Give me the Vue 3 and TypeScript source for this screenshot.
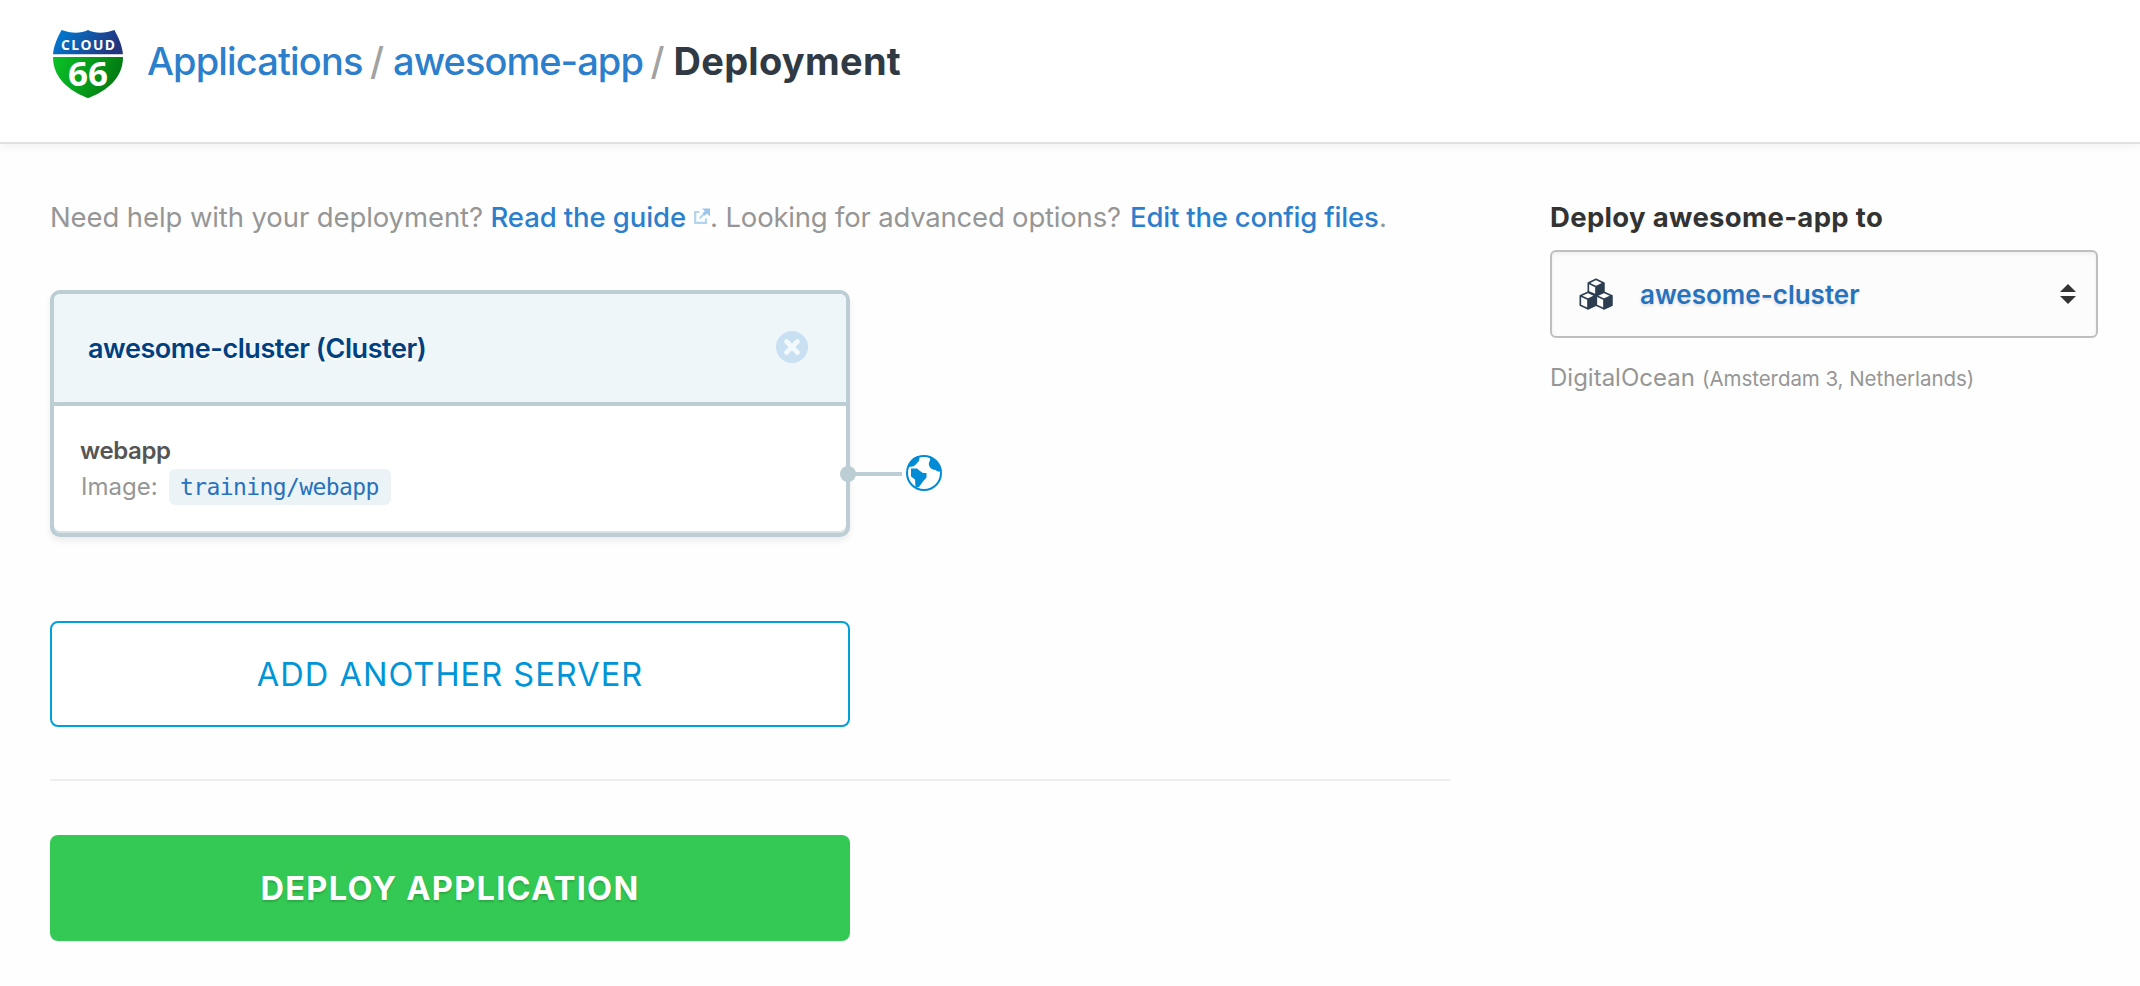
<script setup lang="ts">
interface Service {
  name: string
  image: string
}

const appName = 'awesome-app'
const cluster = 'awesome-cluster'
const services: Service[] = [{ name: 'webapp', image: 'training/webapp' }]
const provider = 'DigitalOcean'
const region = '(Amsterdam 3, Netherlands)'
</script>

<template>
  <div class="page">
    <header class="topbar">
      <svg class="logo" width="70" height="69" viewBox="0 0 70 69">
        <defs>
          <linearGradient id="shieldBlue" x1="0" y1="0" x2="1" y2="0.25">
            <stop offset="0.1" stop-color="#0079d0" />
            <stop offset="1" stop-color="#24357f" />
          </linearGradient>
          <linearGradient id="shieldGreen" x1="0" y1="0" x2="1" y2="0.2">
            <stop offset="0.1" stop-color="#0abb25" />
            <stop offset="1" stop-color="#037a12" />
          </linearGradient>
        </defs>
        <path d="M8.500 0C17 3 27 4 35 0C43 4 53 3 61.500 0C65 7 69 14 70 24.300H0C1 14 5 7 8.500 0Z" fill="url(#shieldBlue)" />
        <path d="M0 27H70C70 49 53 61 35 68.300C17 61 0 49 0 27Z" fill="url(#shieldGreen)" />
        <text class="logo-name" x="8" y="19.900" textLength="54">CLOUD</text>
        <text class="logo-number" x="15" y="55.700" textLength="40" lengthAdjust="spacingAndGlyphs">66</text>
      </svg>
      <nav class="crumbs">
        <a class="crumb-root">Applications</a>
        <span class="slash">/</span>
        <a class="crumb-app">{{ appName }}</a>
        <span class="slash">/</span>
        <strong class="crumb-current">Deployment</strong>
      </nav>
    </header>

    <div class="content">
      <main class="main">
        <p class="help">
          <span class="help-question">Need help with your deployment?</span>
          <a class="help-guide">Read the guide</a>
          <svg class="external" width="16" height="16" viewBox="0 0 16 16">
            <path d="M5.500 4H1.200V14.800H12V10.500" fill="none" stroke="#b4d3ed" stroke-width="2.200" />
            <path d="M5.500 10.500L12 4" fill="none" stroke="#b4d3ed" stroke-width="2" />
            <path d="M8 0.500H16V8.500L13 5.500L10.800 7.700L8.500 5.400L10.800 3.200Z" fill="#9cc6e8" />
          </svg>
          <span class="help-dot">.</span>
          <span class="help-advanced">Looking for advanced options?</span>
          <a class="help-config">Edit the config files</a>
          <span>.</span>
        </p>

        <section class="card">
          <div class="card-head">
            <h2 class="card-title">{{ cluster }} (Cluster)</h2>
            <svg class="close" width="32" height="32" viewBox="0 0 32 32">
              <circle cx="16" cy="16" r="16" fill="#c9dff2" />
              <path d="M10.500 10.500L21.500 21.500M21.500 10.500L10.500 21.500" stroke="#f2f9fc" stroke-width="4.600" stroke-linecap="round" />
            </svg>
          </div>
          <div v-for="service in services" :key="service.name" class="service">
            <div class="service-name">{{ service.name }}</div>
            <div class="service-image">
              <span class="label">Image:</span>
              <code class="image">{{ service.image }}</code>
            </div>
            <svg class="connector" width="104" height="38" viewBox="0 0 104 38">
              <path d="M8 20H62" stroke="#bccdd4" stroke-width="4" />
              <circle cx="8" cy="20" r="8" fill="#bccdd4" />
              <g transform="translate(84 19)">
                <circle r="17" fill="#fff" stroke="#008bd6" stroke-width="2" />
                <path d="M-16.500 -6C-15 -12 -11 -16 -5.500 -17C-4.500 -15 -4 -13.500 -5.500 -11.500C-7.500 -10 -8 -8 -10 -7C-12 -6 -14 -6.500 -16.500 -6Z" fill="#008bd6" />
                <path d="M5 -16.500C13 -14 17.500 -7 17.500 -2C14.500 -1 12.500 -1.500 12 -3C9 -3 6.500 -4.500 5.500 -6.500C4.500 -8.500 4.500 -10 6 -12.500C6.500 -14 6 -15 5 -16.500Z" fill="#008bd6" />
                <path d="M-13 -4.500H-7L-4 -2L-1 0H2.500V4.500L-1 8.500L-5 14L-8.500 14.500L-9 6.500L-13 3.500Z" fill="#008bd6" />
              </g>
            </svg>
          </div>
        </section>

        <button class="button add">ADD ANOTHER SERVER</button>
        <hr class="rule" />
        <button class="button deploy">DEPLOY APPLICATION</button>
      </main>

      <aside class="side">
        <h3 class="side-title">Deploy {{ appName }} to</h3>
        <div class="select">
          <svg class="cubes" width="34" height="32" viewBox="57 54 102 96">
            <g stroke="#2c3e50" stroke-width="5" stroke-linejoin="round">
              <path d="M108 58L131 69V95L108 105L85 95V69Z" fill="#fff" />
              <path d="M108 80L131 69V95L108 105ZM108 80L85 69" fill="#2c3e50" />
              <path d="M84 97L106 107V136L84 146L61 136V107Z" fill="#fff" />
              <path d="M84 118L106 107V136L84 146ZM84 118L61 107" fill="#2c3e50" />
              <path d="M132 97L155 107V136L132 146L109 136V107Z" fill="#fff" />
              <path d="M132 118L155 107V136L132 146ZM132 118L109 107" fill="#2c3e50" />
            </g>
          </svg>
          <span class="select-value">{{ cluster }}</span>
          <svg class="arrows" width="16" height="20" viewBox="0 0 16 20">
            <path d="M0 8L8 0L16 8ZM0 12H16L8 20Z" fill="#333" />
          </svg>
        </div>
        <p class="location">
          <span class="provider">{{ provider }}</span>
          <span class="region">{{ region }}</span>
        </p>
      </aside>
    </div>
  </div>
</template>

<style>
body {
  background: #fefefe;
}
</style>

<style scoped>
.page {
  box-sizing: border-box;
  width: 2140px;
  height: 986px;
  overflow: hidden;
  background: #fefefe;
  color: #969696;
  font-family: Inter, 'Liberation Sans', sans-serif;
  white-space: nowrap;
}

.topbar {
  box-sizing: border-box;
  display: flex;
  align-items: flex-start;
  height: 144px;
  padding: 30px 50px 0 53px;
  border-bottom: 2px solid #e0e0e0;
  background: #fff;
  box-shadow: 0 2px 10px rgba(0, 0, 0, 0.06);
}

.logo {
  flex: none;
  margin-right: 24px;
}

.logo-name,
.logo-number {
  fill: #fff;
  font-family: 'Open Sans', 'Noto Sans', sans-serif;
  font-weight: 700;
}

.logo-name {
  font-size: 13.8px;
}

.logo-number {
  font-size: 34px;
}

.crumbs {
  display: flex;
  font-size: 38px;
  font-weight: 500;
  line-height: 60px;
  padding-top: 1px;
}

a {
  color: #2c7fcc;
}

.crumb-root {
  width: 223px;
  letter-spacing: -0.85px;
}

.crumb-app {
  width: 257.5px;
  letter-spacing: -0.95px;
}

.slash {
  width: 23px;
  color: #a2a2a2;
}

.crumb-current {
  color: #303a44;
  font-weight: 700;
  letter-spacing: 0.28px;
}

.content {
  display: flex;
  gap: 100px;
  padding: 53px 42px 0 50px;
}

.main {
  width: 1400px;
}

.help {
  display: flex;
  align-items: center;
  margin: 0 0 53px;
  font-size: 27.5px;
  line-height: 40px;
}

.help a {
  font-weight: 500;
}

.help-question {
  width: 440.5px;
  letter-spacing: -0.1px;
}

.help-guide {
  width: 203.5px;
  letter-spacing: -0.1px;
}

.external {
  margin-bottom: 2px;
}

.help-dot {
  width: 15.5px;
}

.help-advanced {
  width: 404.500px;
  letter-spacing: -0.2px;
}

.help-config {
  width: 249px;
  letter-spacing: -0.2px;
}

.card {
  box-sizing: border-box;
  width: 800px;
  height: 247px;
  border: 4px solid #bccdd4;
  border-radius: 10px;
  background: #fff;
  box-shadow: 0 4px 6px rgba(0, 0, 0, 0.07), inset 0 -2px 0 #d7e2e5;
}

.card-head {
  box-sizing: border-box;
  display: flex;
  align-items: center;
  justify-content: space-between;
  height: 112px;
  padding: 0 38px 0 34px;
  border-bottom: 4px solid #bccdd4;
  border-radius: 6px 6px 0 0;
  background: #eef6fa;
}

.card-title {
  margin: 0;
  color: #003f80;
  font-size: 27px;
  font-weight: 600;
  letter-spacing: -0.43px;
  text-shadow: 0 2px 0 #fff;
}

.close {
  margin-top: -2px;
}

.service {
  position: relative;
  padding: 26px 0 0 26px;
  font-size: 24px;
}

.service-name {
  height: 37px;
  color: #555;
  font-weight: 600;
  letter-spacing: -0.39px;
  line-height: 37px;
}

.service-image {
  display: flex;
  align-items: center;
  height: 36px;
  line-height: 36px;
}

.label {
  box-sizing: border-box;
  width: 89px;
  padding-left: 1px;
}

.image {
  box-sizing: border-box;
  width: 222px;
  height: 36px;
  padding-left: 11px;
  border-radius: 6px;
  background: #ecf3f7;
  color: #2672be;
  font-family: 'DejaVu Sans Mono', monospace;
  font-size: 23px;
  letter-spacing: -0.6px;
}

/* Overlaps the card's edge and links the service to the public internet. */
.connector {
  position: absolute;
  top: 48px;
  left: 786px;
}

.button {
  box-sizing: border-box;
  display: block;
  width: 800px;
  height: 106px;
  padding: 0;
  border-radius: 8px;
  font-family: inherit;
  font-size: 32.5px;
}

.add {
  margin-top: 84px;
  border: 2px solid #00a0d8;
  background: #fff;
  color: #0095d6;
  letter-spacing: 1.05px;
}

.rule {
  height: 2px;
  margin: 52px 0 54px;
  border: 0;
  background: #eee;
}

.deploy {
  border: 0;
  background: #34c954;
  color: #fff;
  font-weight: 700;
  letter-spacing: 1.28px;
  text-shadow: 0 2px 2px rgba(0, 0, 0, 0.16);
}

.side {
  width: 548px;
}

.side-title {
  margin: 0 0 13px;
  color: #333;
  font-size: 27.5px;
  font-weight: 700;
  letter-spacing: 0.33px;
  line-height: 40px;
}

.select {
  box-sizing: border-box;
  display: flex;
  align-items: center;
  height: 88px;
  padding: 0 20px 0 27px;
  border: 2px solid #bfbfbf;
  border-radius: 6px;
  background: #fcfcfc;
  box-shadow: inset 0 2px 4px rgba(0, 0, 0, 0.06);
}

.select-value {
  flex: 1;
  margin-left: 27px;
  color: #2672be;
  font-size: 26px;
  font-weight: 600;
  text-shadow: 0 2px 3px rgba(0, 0, 0, 0.12);
}

.location {
  display: flex;
  align-items: baseline;
  margin: 20px 0 0;
  line-height: 40px;
}

.provider {
  width: 152px;
  font-size: 24px;
}

.region {
  font-size: 20.5px;
  letter-spacing: -0.05px;
}
</style>
